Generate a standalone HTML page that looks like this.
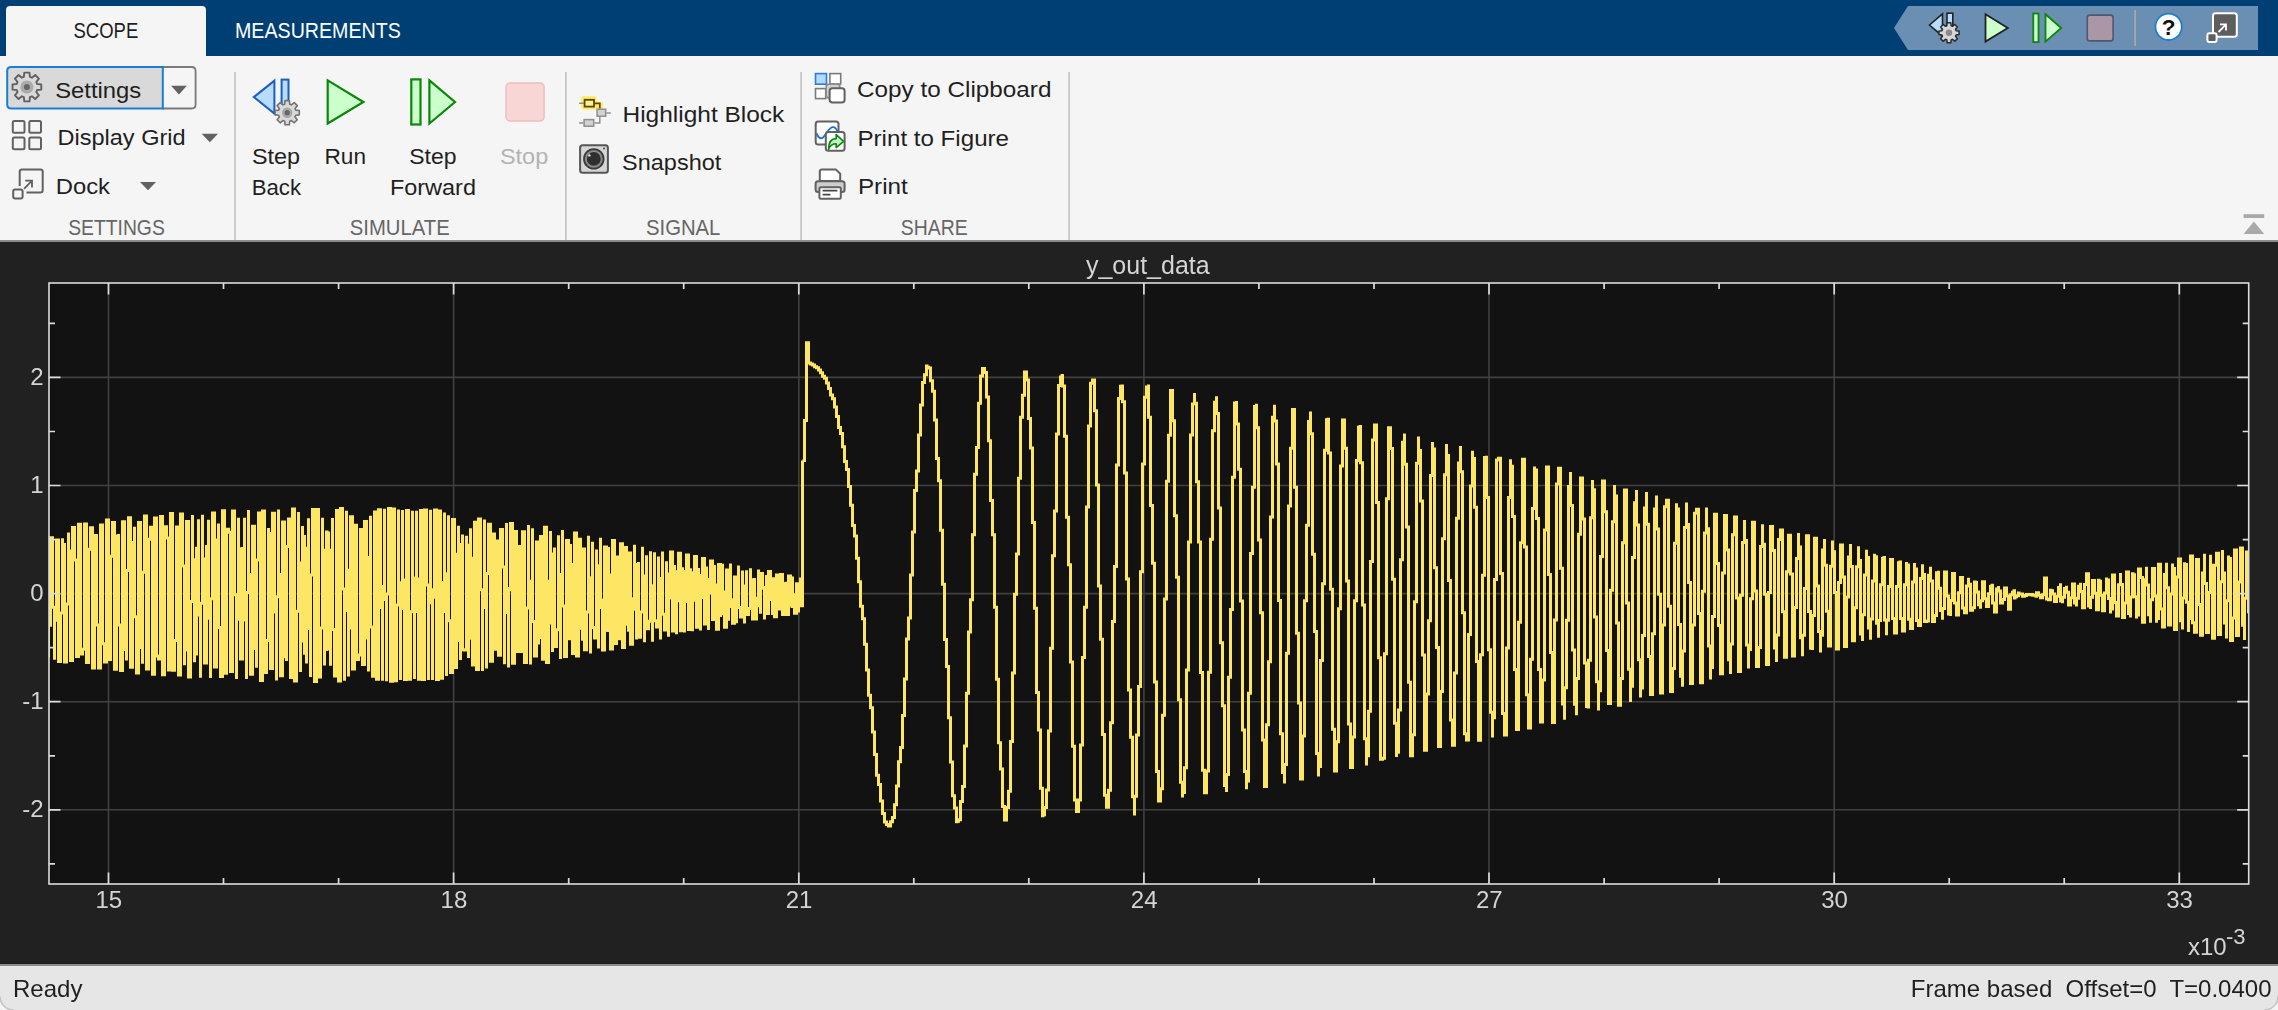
<!DOCTYPE html>
<html><head><meta charset="utf-8"><title>Scope</title>
<style>
html,body{margin:0;padding:0;background:#212121;width:2278px;height:1010px;overflow:hidden}
svg{position:absolute;left:0;top:0;display:block}
text{font-family:"Liberation Sans",sans-serif;white-space:pre}
</style></head>
<body>
<svg width="2278" height="1010" viewBox="0 0 2278 1010" style="will-change:transform">
<g id="plot">
<rect x="0" y="242" width="2278" height="722" fill="#212121"/>
<rect x="49" y="283" width="2199.7" height="601" fill="#121212"/>
<path d="M108.5 283V884M453.6 283V884M798.8 283V884M1143.9 283V884M1489.0 283V884M1834.2 283V884M2179.3 283V884M49 377.4H2248.7M49 485.5H2248.7M49 593.6H2248.7M49 701.7H2248.7M49 809.8H2248.7" stroke="#404040" stroke-width="1.6" fill="none"/>
<clipPath id="cp"><rect x="49" y="283" width="2199.7" height="601"/></clipPath>
<g clip-path="url(#cp)" fill="none" stroke="#fce663" stroke-linejoin="miter"><path d="M46.5 536.8H46.5V601.5H48.5V657.5H48.5V625.2H50.5V549.5H50.5V537.7H52.5V607.2H54.5V659.8H54.5V620.2H56.5V544.1H56.5V540.1H58.5V614.5H58.5V661.4H60.5V613.1H62.5V538.3H62.5V544.4H64.5V623.3H64.5V661.9H66.5V604.0H68.5V532.5H68.5V550.9H70.5V633.2H70.5V660.5H72.5V592.6H72.5V527.5H74.5V560.1H76.5V643.7H76.5V656.6H78.5V579.3H78.5V524.3H80.5V572.4H80.5V653.9H82.5V649.2H84.5V564.5H84.5V524.0H86.5V587.8H86.5V662.6H88.5V637.8H88.5V549.3H90.5V527.8H92.5V605.7H92.5V668.0H94.5V621.9H94.5V535.4H96.5V537.2H96.5V625.0H98.5V668.1H100.5V601.9H100.5V525.0H102.5V552.5H102.5V643.7H104.5V661.9H106.5V579.4H106.5V519.9H108.5V573.3H108.5V659.5H110.5V648.4H110.5V556.3H112.5V522.4H114.5V598.3H114.5V669.3H116.5V627.4H116.5V535.9H118.5V533.9H118.5V625.0H120.5V670.4H122.5V600.4H122.5V521.8H124.5V554.9H124.5V649.6H126.5V660.5H126.5V570.5H128.5V517.8H130.5V583.8H130.5V667.2H132.5V639.1H132.5V542.5H134.5V526.8H134.5V616.7H136.5V673.0H138.5V608.0H138.5V522.4H140.5V549.5H140.5V647.6H142.5V663.7H142.5V572.2H144.5V516.0H146.5V583.3H146.5V669.0H148.5V638.5H148.5V539.3H150.5V527.3H152.5V621.9H152.5V674.2H154.5V601.3H154.5V518.0H156.5V556.3H156.5V655.9H158.5V658.9H160.5V560.1H160.5V516.4H162.5V597.7H162.5V674.8H164.5V624.5H164.5V526.8H166.5V537.9H168.5V640.3H168.5V670.1H170.5V579.2H170.5V513.4H172.5V578.7H172.5V670.2H174.5V640.4H176.5V537.1H176.5V527.0H178.5V626.8H178.5V675.0H180.5V593.3H180.5V514.0H182.5V566.1H184.5V665.2H184.5V649.9H186.5V544.9H186.5V521.4H188.5V618.1H188.5V676.9H190.5V601.4H192.5V515.1H192.5V559.7H194.5V662.3H194.5V654.1H196.5V548.3H198.5V519.2H198.5V615.1H200.5V677.7H200.5V603.3H202.5V514.8H202.5V559.1H204.5V662.9H206.5V653.8H206.5V546.6H208.5V519.7H208.5V618.3H210.5V677.9H210.5V598.8H212.5V513.0H214.5V564.3H214.5V667.0H216.5V648.7H216.5V539.9H218.5V523.5H218.5V627.4H220.5V676.6H222.5V587.8H222.5V510.8H224.5V576.0H224.5V673.3H226.5V637.7H226.5V529.3H228.5V532.3H230.5V641.8H230.5V671.6H232.5V570.5H232.5V511.0H234.5V594.8H236.5V678.9H236.5V619.2H238.5V517.8H238.5V548.7H240.5V659.0H240.5V659.1H242.5V548.6H244.5V517.8H244.5V620.0H246.5V678.9H246.5V592.5H248.5V510.1H248.5V574.6H250.5V674.3H252.5V636.1H252.5V526.2H254.5V535.8H254.5V648.4H256.5V667.8H256.5V559.9H258.5V513.1H260.5V609.4H260.5V680.4H262.5V601.4H262.5V510.9H264.5V568.0H264.5V672.4H266.5V640.4H268.5V528.1H268.5V533.6H270.5V647.4H270.5V668.4H272.5V559.2H272.5V513.2H274.5V612.1H276.5V680.5H276.5V596.7H278.5V509.6H278.5V574.4H280.5V675.8H282.5V632.8H282.5V522.0H284.5V541.6H284.5V656.7H286.5V661.0H286.5V546.6H288.5V518.9H290.5V627.9H290.5V677.6H292.5V578.2H292.5V508.9H294.5V594.9H294.5V681.0H296.5V611.3H298.5V511.9H298.5V563.0H300.5V672.0H300.5V640.9H302.5V526.1H302.5V536.6H304.5V653.3H306.5V663.5H306.5V548.3H308.5V518.3H308.5V628.5H310.5V677.1H310.5V575.0H312.5V509.4H314.5V601.0H314.5V681.4H316.5V602.5H316.5V509.6H318.5V574.1H318.5V677.0H320.5V628.1H322.5V517.7H322.5V550.3H324.5V665.6H324.5V649.6H326.5V531.9H328.5V531.4H328.5V649.1H330.5V665.8H330.5V550.2H332.5V518.1H332.5V629.6H334.5V676.1H336.5V570.4H336.5V510.6H338.5V609.0H338.5V680.9H340.5V591.0H340.5V508.4H342.5V588.9H344.5V680.7H344.5V610.5H346.5V510.8H346.5V570.3H348.5V676.4H348.5V628.0H350.5V516.8H352.5V554.0H352.5V669.0H354.5V642.9H354.5V525.3H356.5V540.4H356.5V659.6H358.5V655.1H360.5V535.5H360.5V529.6H362.5V648.9H362.5V664.5H364.5V546.4H364.5V521.5H366.5V637.9H368.5V671.5H368.5V557.4H370.5V515.7H370.5V627.0H372.5V676.2H374.5V568.0H374.5V511.9H376.5V616.8H376.5V679.2H378.5V577.8H378.5V509.7H380.5V607.5H382.5V680.7H382.5V586.5H384.5V508.7H384.5V599.4H386.5V681.3H386.5V594.0H388.5V508.5H390.5V592.5H390.5V681.2H392.5V600.2H392.5V508.9H394.5V587.0H394.5V680.7H396.5V605.0H398.5V509.4H398.5V582.8H400.5V680.0H400.5V608.6H402.5V510.0H402.5V580.0H404.5V679.5H406.5V610.8H406.5V510.5H408.5V578.4H408.5V679.2H410.5V611.7H412.5V510.7H412.5V578.1H414.5V679.0H414.5V611.4H416.5V510.7H416.5V579.1H418.5V679.2H420.5V609.8H420.5V510.5H422.5V581.3H422.5V679.5H424.5V606.9H424.5V510.1H426.5V584.9H428.5V679.9H428.5V602.7H430.5V509.7H430.5V589.7H432.5V679.9H432.5V597.2H434.5V510.1H436.5V595.8H436.5V679.4H438.5V590.5H438.5V510.9H440.5V603.1H440.5V678.2H442.5V582.6H444.5V512.5H444.5V611.5H446.5V676.1H446.5V573.8H448.5V515.3H448.5V620.7H450.5V672.6H452.5V564.2H452.5V519.5H454.5V630.6H454.5V667.5H456.5V554.2H458.5V525.8H458.5V640.4H460.5V659.9H460.5V544.6H462.5V534.5H462.5V649.8H464.5V650.1H466.5V535.7H466.5V545.3H468.5V658.1H468.5V638.2H470.5V528.2H470.5V558.3H472.5V664.9H474.5V624.4H474.5V522.2H476.5V573.1H476.5V669.6H478.5V608.6H478.5V519.0H480.5V589.7H482.5V671.0H482.5V591.4H484.5V519.5H484.5V607.4H486.5V668.5H486.5V573.5H488.5V524.3H490.5V625.1H490.5V661.3H492.5V556.2H492.5V533.9H494.5V641.6H494.5V649.3H496.5V540.9H498.5V548.3H498.5V655.2H500.5V632.7H500.5V529.4H502.5V566.9H504.5V664.3H504.5V612.4H506.5V523.1H506.5V588.6H508.5V667.4H508.5V589.7H510.5V523.5H512.5V611.6H512.5V663.3H514.5V566.9H514.5V531.4H516.5V633.6H516.5V651.5H518.5V546.6H520.5V547.0H520.5V651.5H522.5V632.5H522.5V531.7H524.5V569.0H524.5V662.6H526.5V608.1H528.5V525.0H528.5V595.0H530.5V664.5H530.5V581.3H532.5V528.2H532.5V621.6H534.5V656.0H536.5V556.0H536.5V541.9H538.5V644.5H538.5V637.4H540.5V536.6H542.5V564.9H542.5V659.3H544.5V611.0H544.5V527.2H546.5V593.6H546.5V662.5H548.5V581.2H550.5V530.9H550.5V622.9H552.5V652.1H552.5V553.9H554.5V547.5H554.5V646.6H556.5V629.8H558.5V535.3H558.5V574.5H560.5V659.0H560.5V599.7H562.5V530.1H562.5V606.1H564.5V656.4H566.5V568.4H566.5V540.5H568.5V634.9H568.5V638.7H570.5V543.9H570.5V564.6H572.5V653.4H574.5V609.6H574.5V532.9H576.5V596.8H576.5V655.9H578.5V576.5H578.5V539.3H580.5V628.3H582.5V640.8H582.5V549.0H584.5V562.2H584.5V649.7H586.5V611.9H588.5V535.7H588.5V595.0H590.5V653.6H590.5V577.7H592.5V541.7H592.5V627.6H594.5V638.0H596.5V549.6H596.5V565.7H598.5V648.6H598.5V607.6H600.5V537.8H600.5V599.9H602.5V650.0H604.5V572.8H604.5V547.1H606.5V631.8H606.5V630.6H608.5V546.9H608.5V574.9H610.5V648.9H612.5V597.3H612.5V540.6H614.5V610.3H614.5V643.6H616.5V563.4H616.5V557.0H618.5V638.7H620.5V617.7H620.5V543.7H622.5V589.8H622.5V647.4H624.5V581.9H624.5V547.4H626.5V624.3H628.5V631.7H628.5V552.9H630.5V573.3H630.5V644.2H632.5V598.7H634.5V544.7H634.5V609.2H636.5V639.5H636.5V564.4H638.5V561.9H638.5V637.2H640.5V611.9H642.5V546.7H642.5V596.0H644.5V642.2H644.5V575.9H646.5V555.2H646.5V628.8H648.5V621.2H650.5V551.2H650.5V585.7H652.5V641.7H652.5V585.7H654.5V552.2H654.5V620.8H656.5V626.9H658.5V556.5H658.5V578.5H660.5V639.5H660.5V593.1H662.5V551.5H662.5V614.3H664.5V630.0H666.5V561.3H666.5V574.0H668.5V636.8H668.5V598.1H670.5V552.1H672.5V609.6H672.5V631.1H674.5V565.0H674.5V571.8H676.5V634.3H676.5V600.8H678.5V553.3H680.5V607.0H680.5V630.8H682.5V567.3H682.5V571.5H684.5V632.4H684.5V601.5H686.5V554.9H688.5V606.2H688.5V629.4H690.5V568.2H690.5V572.8H692.5V631.3H692.5V600.3H694.5V556.5H696.5V607.2H696.5V627.2H698.5V567.9H698.5V575.5H700.5V630.6H700.5V597.4H702.5V558.4H704.5V609.6H704.5V624.0H706.5V566.6H706.5V579.6H708.5V630.1H708.5V593.1H710.5V561.0H712.5V613.1H712.5V619.6H714.5V564.9H714.5V585.1H716.5V629.2H718.5V587.6H718.5V564.6H720.5V617.1H720.5V613.7H722.5V563.7H722.5V592.0H724.5V627.2H726.5V581.5H726.5V569.9H728.5V620.8H728.5V606.4H730.5V563.6H730.5V599.7H732.5V623.3H734.5V575.5H734.5V577.0H736.5V623.3H736.5V597.7H738.5V565.5H738.5V607.6H740.5V617.1H742.5V570.6H742.5V585.9H744.5V623.5H744.5V588.4H746.5V570.2H746.5V614.5H748.5V608.6H750.5V568.2H750.5V596.0H752.5V620.5H752.5V579.8H754.5V578.0H754.5V619.0H756.5V598.2H758.5V569.4H758.5V605.8H760.5V613.8H760.5V573.6H762.5V588.3H764.5V619.5H764.5V587.5H766.5V574.9H766.5V613.5H768.5V603.9H768.5V571.6H770.5V599.4H772.5V615.1H772.5V578.8H774.5V584.4H774.5V616.7H776.5V592.5H776.5V575.0H778.5V609.0H780.5V606.2H780.5V574.4H782.5V595.9H782.5V614.5H784.5V582.2H784.5V583.2H786.5V614.4H788.5V594.7H788.5V575.9H790.5V606.6H790.5V606.5H792.5V576.4H792.5V594.8H794.5V613.2H796.5V583.8H796.5V583.8H798.5V612.6H798.5V594.9H800.5V577.5H800.5V605.8H802.5V460.6" stroke-width="3"/><path d="M802.5 460.6H804.5V420.6H806.5V342.8H808.5V362.9H810.5V363.4H810.5V363.9H812.5V364.5H812.5V365.1H814.5V365.9H814.5V366.7H816.5V367.7H818.5V368.7H818.5V369.9H820.5V371.3H820.5V372.8H822.5V374.4H822.5V376.2H824.5V378.3H826.5V380.5H826.5V382.9H828.5V385.6H828.5V388.5H830.5V391.6H830.5V395.0H832.5V398.7H834.5V402.7H834.5V407.1H836.5V411.7H836.5V416.6H838.5V422.0H838.5V427.6H840.5V433.6H842.5V440.0H842.5V446.8H844.5V454.0H844.5V461.5H846.5V469.5H848.5V477.8H848.5V486.6H850.5V495.7H850.5V505.2H852.5V515.1H852.5V525.4H854.5V536.0H856.5V547.0H856.5V558.3H858.5V569.9H858.5V581.8H860.5V593.9H860.5V606.3H862.5V618.8H864.5V631.5H864.5V644.2H866.5V657.0H866.5V669.9H868.5V682.6H868.5V695.3H870.5V707.7H872.5V720.0H872.5V731.9H874.5V743.5H874.5V754.6H876.5V765.2H876.5V775.2H878.5V784.5H880.5V793.1H880.5V800.9H882.5V807.7H882.5V813.6H884.5V818.4H884.5V822.1H886.5V824.6H888.5V825.9H890.5V824.4H890.5V821.7H892.5V817.4H894.5V811.8H894.5V804.7H896.5V796.1H896.5V786.1H898.5V774.6H898.5V761.7H900.5V747.5H902.5V732.1H902.5V715.4H904.5V697.6H904.5V678.9H906.5V659.2H906.5V638.9H908.5V617.9H910.5V596.6H910.5V575.1H912.5V553.5H912.5V532.1H914.5V511.1H914.5V490.6H916.5V471.0H918.5V452.4H918.5V435.1H920.5V419.3H920.5V405.1H922.5V392.8H922.5V382.6H924.5V374.7H926.5V369.1H926.5V366.1H928.5V365.7H928.5V368.0H930.5V373.0H930.5V380.7H932.5V391.2H934.5V404.4H934.5V420.1H936.5V438.2H936.5V458.5H938.5V480.8H940.5V504.8H940.5V530.3H942.5V556.8H942.5V584.2H944.5V611.8H944.5V639.4H946.5V666.6H948.5V692.8H948.5V717.8H950.5V740.9H950.5V761.9H952.5V780.3H952.5V795.8H954.5V808.0H956.5V816.7H956.5V821.7H958.5V822.7H958.5V819.7H960.5V812.7H960.5V801.6H962.5V786.6H964.5V768.0H964.5V746.0H966.5V720.9H966.5V693.2H968.5V663.4H968.5V632.0H970.5V599.7H972.5V567.1H972.5V534.8H974.5V503.7H974.5V474.3H976.5V447.4H978.5V423.5H978.5V403.3H980.5V387.3H980.5V375.9H982.5V369.6H982.5V368.4H984.5V372.6H986.5V382.2H986.5V396.9H988.5V416.6H988.5V440.8H990.5V469.0H990.5V500.6H992.5V534.7H994.5V570.6H994.5V607.3H996.5V643.9H996.5V679.3H998.5V712.6H998.5V742.8H1000.5V769.1H1002.5V790.6H1002.5V806.6H1004.5V816.5H1004.5V820.1H1006.5V817.1H1006.5V807.4H1008.5V791.3H1010.5V769.1H1010.5V741.5H1012.5V709.2H1012.5V673.1H1014.5V634.4H1014.5V594.3H1016.5V554.0H1018.5V514.8H1018.5V478.2H1020.5V445.2H1020.5V417.2H1022.5V395.2H1024.5V379.9H1024.5V372.0H1026.5V379.9H1028.5V395.6H1028.5V418.5H1030.5V448.0H1032.5V483.0H1032.5V522.4H1034.5V564.6H1034.5V608.2H1036.5V651.4H1036.5V692.6H1038.5V730.1H1040.5V762.4H1040.5V788.2H1042.5V806.2H1042.5V815.7H1044.5V816.2H1044.5V807.6H1046.5V790.0H1048.5V764.1H1048.5V730.9H1050.5V691.7H1050.5V648.2H1052.5V602.2H1052.5V555.8H1054.5V510.9H1056.5V469.6H1056.5V433.9H1058.5V405.4H1058.5V385.6H1060.5V375.4H1060.5V375.5H1062.5V386.0H1064.5V406.6H1064.5V436.3H1066.5V473.8H1066.5V517.3H1068.5V564.8H1070.5V613.8H1070.5V662.1H1072.5V707.0H1072.5V746.3H1074.5V777.9H1074.5V800.0H1076.5V811.5H1078.5V811.5H1078.5V800.1H1080.5V777.6H1080.5V745.1H1082.5V704.4H1082.5V657.6H1084.5V607.2H1086.5V556.1H1086.5V507.0H1088.5V462.8H1088.5V426.1H1090.5V399.0H1090.5V383.2H1092.5V379.9H1094.5V389.1H1094.5V410.7H1096.5V443.3H1096.5V485.1H1098.5V533.7H1098.5V586.1H1100.5V639.3H1102.5V689.7H1102.5V734.4H1104.5V770.3H1104.5V795.2H1106.5V807.2H1108.5V805.6H1108.5V790.3H1110.5V762.1H1110.5V722.8H1112.5V674.9H1112.5V621.6H1114.5V566.4H1116.5V513.0H1116.5V465.1H1118.5V426.0H1118.5V398.6H1120.5V384.8H1120.5V385.9H1122.5V401.7H1124.5V431.4H1124.5V472.9H1126.5V523.3H1126.5V579.0H1128.5V636.0H1128.5V690.1H1130.5V737.2H1132.5V773.7H1132.5V796.8H1134.5V815.4H1134.5V796.3H1136.5V772.5H1136.5V735.0H1138.5V686.4H1140.5V630.5H1140.5V571.7H1142.5V514.7H1142.5V464.0H1144.5V423.7H1144.5V397.3H1146.5V387.0H1148.5V384.6H1148.5V417.3H1150.5V455.6H1150.5V505.6H1152.5V563.3H1154.5V623.8H1154.5V681.9H1156.5V732.6H1156.5V771.4H1158.5V794.9H1158.5V800.9H1160.5V788.8H1162.5V759.4H1162.5V715.2H1164.5V660.1H1164.5V599.1H1166.5V537.6H1166.5V481.2H1168.5V435.3H1170.5V404.0H1170.5V390.6H1172.5V396.3H1172.5V420.8H1174.5V461.9H1174.5V515.7H1176.5V577.3H1178.5V640.7H1178.5V699.7H1180.5V748.5H1180.5V782.3H1182.5V797.5H1182.5V792.6H1184.5V767.8H1186.5V725.6H1186.5V670.0H1188.5V606.6H1188.5V542.0H1190.5V482.8H1190.5V435.1H1192.5V404.0H1194.5V393.0H1194.5V403.2H1196.5V433.9H1196.5V481.8H1198.5V542.0H1200.5V607.9H1200.5V672.6H1202.5V728.8H1202.5V770.3H1204.5V792.6H1204.5V792.8H1206.5V771.0H1208.5V729.3H1208.5V672.3H1210.5V606.5H1210.5V539.3H1212.5V478.4H1212.5V430.8H1214.5V402.3H1216.5V396.3H1216.5V413.6H1218.5V452.3H1218.5V508.0H1220.5V574.2H1220.5V642.8H1222.5V705.8H1224.5V755.4H1224.5V785.4H1226.5V792.1H1226.5V774.4H1228.5V734.6H1228.5V677.3H1230.5V609.6H1232.5V540.0H1232.5V477.3H1234.5V429.6H1234.5V402.9H1236.5V400.9H1236.5V424.0H1238.5V469.2H1240.5V531.0H1240.5V601.1H1242.5V670.5H1242.5V729.9H1244.5V771.4H1246.5V789.2H1246.5V780.9H1248.5V747.5H1248.5V693.2H1250.5V625.5H1250.5V553.6H1252.5V487.3H1254.5V435.9H1254.5V406.6H1256.5V403.7H1256.5V427.7H1258.5V475.4H1258.5V540.1H1260.5V612.7H1262.5V682.7H1262.5V740.1H1264.5V776.5H1264.5V786.4H1266.5V768.3H1266.5V724.7H1268.5V661.8H1270.5V589.0H1270.5V517.1H1272.5V456.8H1272.5V417.3H1274.5V404.7H1274.5V421.0H1276.5V463.9H1278.5V526.9H1278.5V600.4H1280.5V673.1H1280.5V733.7H1282.5V772.5H1284.5V783.4H1284.5V764.6H1286.5V718.8H1286.5V653.2H1288.5V578.3H1288.5V506.1H1290.5V448.2H1292.5V414.1H1292.5V409.4H1294.5V435.3H1294.5V487.3H1296.5V557.2H1296.5V633.3H1298.5V703.0H1300.5V754.5H1300.5V779.1H1302.5V772.6H1302.5V735.9H1304.5V675.1H1304.5V600.7H1306.5V525.2H1308.5V461.8H1308.5V421.6H1310.5V411.6H1310.5V433.8H1312.5V484.3H1312.5V554.3H1314.5V631.5H1316.5V702.1H1316.5V753.5H1318.5V776.4H1318.5V766.4H1320.5V725.3H1320.5V660.5H1322.5V583.7H1324.5V509.0H1324.5V450.2H1326.5V418.3H1326.5V419.2H1328.5V453.1H1330.5V513.5H1330.5V589.3H1332.5V666.0H1332.5V729.2H1334.5V766.6H1334.5V771.1H1336.5V741.7H1338.5V683.9H1338.5V608.8H1340.5V531.1H1340.5V466.0H1342.5V426.3H1342.5V419.9H1344.5V448.2H1346.5V505.7H1346.5V581.0H1348.5V659.0H1348.5V724.0H1350.5V762.8H1350.5V767.5H1352.5V736.9H1354.5V677.3H1354.5V600.8H1356.5V523.1H1356.5V460.4H1358.5V425.8H1358.5V426.6H1360.5V462.7H1362.5V526.6H1362.5V604.9H1364.5V681.0H1364.5V738.7H1366.5V765.6H1366.5V755.7H1368.5V711.2H1370.5V641.4H1370.5V561.6H1372.5V489.2H1372.5V440.0H1374.5V424.9H1376.5V447.4H1376.5V502.6H1378.5V578.3H1378.5V657.7H1380.5V722.9H1380.5V759.2H1382.5V758.3H1384.5V720.3H1384.5V653.7H1386.5V573.8H1386.5V498.8H1388.5V446.0H1388.5V427.7H1390.5V448.4H1392.5V503.1H1392.5V579.3H1394.5V658.9H1394.5V723.3H1396.5V757.1H1396.5V752.3H1398.5V710.1H1400.5V640.3H1400.5V559.8H1402.5V488.0H1402.5V442.2H1404.5V433.6H1404.5V464.3H1406.5V526.9H1408.5V606.1H1408.5V682.3H1410.5V736.7H1410.5V755.8H1412.5V734.7H1414.5V678.7H1414.5V601.8H1416.5V523.4H1416.5V463.2H1418.5V436.6H1418.5V450.4H1420.5V501.1H1422.5V575.7H1422.5V655.1H1424.5V718.8H1424.5V750.3H1426.5V741.2H1426.5V693.9H1428.5V620.8H1430.5V541.0H1430.5V475.5H1432.5V441.9H1432.5V449.0H1434.5V495.0H1434.5V567.7H1436.5V647.5H1438.5V713.0H1438.5V746.4H1440.5V738.6H1440.5V691.6H1442.5V618.3H1442.5V538.7H1444.5V474.7H1446.5V444.1H1446.5V455.4H1448.5V505.4H1448.5V580.4H1450.5V659.3H1450.5V720.0H1452.5V745.3H1454.5V728.0H1454.5V672.9H1456.5V595.6H1456.5V518.3H1458.5V463.0H1460.5V445.9H1460.5V471.8H1462.5V533.4H1462.5V612.8H1464.5V686.8H1464.5V733.8H1466.5V739.9H1468.5V703.2H1468.5V634.6H1470.5V554.2H1470.5V486.1H1472.5V450.7H1472.5V458.5H1474.5V507.3H1476.5V582.5H1476.5V661.4H1478.5V719.9H1478.5V740.2H1480.5V716.0H1480.5V654.8H1482.5V575.2H1484.5V501.8H1484.5V457.4H1486.5V455.8H1486.5V497.6H1488.5V569.8H1488.5V649.7H1490.5V712.2H1492.5V737.6H1492.5V717.7H1494.5V658.8H1494.5V579.6H1496.5V505.4H1496.5V460.1H1498.5V458.3H1500.5V500.6H1500.5V573.4H1502.5V653.0H1502.5V713.5H1504.5V735.0H1506.5V710.5H1506.5V648.0H1508.5V568.2H1508.5V497.4H1510.5V459.2H1510.5V466.3H1512.5V516.4H1514.5V592.7H1514.5V669.6H1516.5V721.0H1516.5V729.6H1518.5V692.5H1518.5V622.2H1520.5V542.8H1522.5V481.4H1522.5V459.2H1524.5V483.9H1524.5V546.9H1526.5V626.4H1526.5V694.7H1528.5V728.0H1530.5V714.6H1530.5V659.2H1532.5V581.3H1532.5V508.4H1534.5V466.4H1534.5V470.1H1536.5V518.4H1538.5V593.8H1538.5V669.5H1540.5V718.1H1540.5V722.1H1542.5V680.1H1544.5V607.2H1544.5V530.1H1546.5V476.8H1546.5V467.0H1548.5V504.1H1548.5V574.6H1550.5V652.4H1552.5V708.7H1552.5V722.5H1554.5V688.7H1554.5V619.9H1556.5V541.9H1556.5V484.1H1558.5V468.3H1560.5V500.4H1560.5V568.3H1562.5V646.0H1562.5V703.9H1564.5V719.8H1564.5V687.8H1566.5V620.2H1568.5V543.1H1568.5V486.4H1570.5V472.0H1570.5V505.6H1572.5V573.8H1572.5V650.0H1574.5V704.2H1576.5V715.2H1576.5V678.6H1578.5V609.1H1578.5V534.2H1580.5V483.8H1580.5V478.1H1582.5V519.1H1584.5V590.3H1584.5V663.1H1586.5V708.0H1586.5V706.9H1588.5V660.3H1590.5V587.3H1590.5V517.7H1592.5V480.1H1592.5V489.8H1594.5V542.6H1594.5V616.9H1596.5V681.8H1598.5V710.4H1598.5V690.7H1600.5V631.1H1600.5V556.6H1602.5V498.4H1602.5V481.0H1604.5V511.8H1606.5V577.7H1606.5V650.6H1608.5V699.6H1608.5V703.6H1610.5V661.1H1610.5V590.3H1612.5V521.8H1614.5V485.0H1614.5V496.0H1616.5V549.8H1616.5V623.0H1618.5V683.7H1618.5V705.3H1620.5V678.4H1622.5V614.9H1622.5V542.7H1624.5V494.0H1624.5V490.1H1626.5V532.9H1626.5V603.1H1628.5V669.3H1630.5V701.9H1630.5V686.3H1632.5V629.6H1632.5V557.5H1634.5V502.7H1636.5V490.0H1636.5V525.1H1638.5V591.9H1638.5V659.7H1640.5V697.5H1640.5V687.9H1642.5V635.5H1644.5V564.5H1644.5V508.0H1646.5V492.1H1646.5V524.2H1648.5V589.1H1648.5V656.4H1650.5V694.5H1652.5V685.5H1652.5V633.8H1654.5V563.9H1654.5V509.1H1656.5V495.4H1656.5V529.1H1658.5V594.2H1660.5V659.2H1660.5V693.0H1662.5V679.4H1662.5V625.0H1664.5V556.4H1664.5V506.8H1666.5V500.3H1668.5V540.0H1668.5V606.3H1670.5V666.7H1670.5V691.5H1672.5V668.5H1674.5V609.3H1674.5V543.3H1676.5V503.3H1676.5V509.1H1678.5V557.6H1678.5V624.6H1680.5V676.2H1682.5V686.8H1682.5V650.9H1684.5V587.0H1684.5V527.4H1686.5V502.4H1686.5V524.6H1688.5V582.5H1690.5V646.4H1690.5V683.6H1692.5V674.9H1692.5V625.1H1694.5V560.0H1694.5V513.3H1696.5V509.2H1698.5V549.7H1698.5V613.6H1700.5V667.3H1700.5V682.8H1702.5V652.0H1702.5V591.3H1704.5V532.9H1706.5V507.6H1706.5V528.8H1708.5V584.9H1708.5V646.1H1710.5V679.5H1710.5V667.4H1712.5V616.5H1714.5V554.3H1714.5V514.3H1716.5V518.2H1716.5V563.6H1718.5V625.6H1720.5V670.4H1720.5V673.7H1722.5V633.9H1722.5V573.0H1724.5V524.8H1724.5V515.5H1726.5V550.1H1728.5V609.1H1728.5V659.8H1730.5V674.0H1730.5V644.0H1732.5V586.9H1732.5V534.8H1734.5V516.9H1736.5V542.9H1736.5V598.0H1738.5V650.8H1738.5V671.5H1740.5V648.6H1740.5V595.3H1742.5V542.4H1744.5V519.9H1744.5V540.5H1746.5V592.2H1746.5V645.0H1748.5V668.5H1748.5V649.4H1750.5V598.7H1752.5V546.2H1752.5V522.3H1754.5V541.0H1754.5V591.0H1756.5V643.1H1756.5V666.5H1758.5V647.6H1760.5V597.7H1760.5V546.5H1762.5V524.3H1762.5V544.2H1764.5V594.2H1766.5V644.3H1766.5V664.5H1768.5V642.8H1768.5V592.5H1770.5V543.9H1770.5V526.5H1772.5V550.5H1774.5V601.3H1774.5V647.9H1776.5V661.9H1776.5V634.9H1778.5V583.6H1778.5V539.6H1780.5V529.9H1782.5V560.3H1782.5V611.8H1784.5V652.5H1784.5V657.2H1786.5V623.2H1786.5V571.8H1788.5V535.2H1790.5V536.2H1790.5V574.0H1792.5V624.6H1792.5V656.1H1794.5V648.8H1794.5V607.5H1796.5V558.5H1798.5V533.0H1798.5V547.1H1800.5V591.5H1800.5V637.8H1802.5V656.2H1802.5V635.2H1804.5V588.4H1806.5V546.2H1806.5V535.8H1808.5V563.7H1808.5V611.6H1810.5V648.3H1812.5V649.9H1812.5V615.6H1814.5V568.0H1814.5V538.3H1816.5V546.0H1816.5V585.9H1818.5V631.4H1820.5V652.5H1820.5V635.3H1822.5V591.3H1822.5V550.1H1824.5V538.9H1824.5V565.3H1826.5V611.3H1828.5V646.0H1828.5V646.1H1830.5V611.6H1830.5V566.2H1832.5V540.4H1832.5V551.8H1834.5V592.4H1836.5V634.4H1836.5V649.1H1838.5V626.7H1838.5V582.6H1840.5V547.3H1840.5V545.0H1842.5V577.1H1844.5V621.2H1844.5V646.6H1846.5V635.9H1846.5V596.9H1848.5V557.0H1850.5V544.0H1850.5V566.6H1852.5V608.8H1852.5V640.7H1854.5V640.0H1854.5V607.7H1856.5V566.7H1858.5V546.2H1858.5V560.4H1860.5V598.9H1860.5V634.0H1862.5V640.9H1862.5V614.8H1864.5V574.9H1866.5V549.8H1866.5V557.4H1868.5V591.9H1868.5V628.0H1870.5V639.8H1870.5V618.9H1872.5V581.0H1874.5V553.7H1874.5V556.8H1876.5V587.6H1876.5V623.3H1878.5V637.7H1878.5V620.5H1880.5V584.8H1882.5V557.1H1882.5V557.6H1884.5V585.7H1884.5V620.1H1886.5V635.3H1886.5V620.3H1888.5V586.6H1890.5V559.6H1890.5V559.5H1892.5V585.8H1892.5V618.6H1894.5V633.0H1896.5V618.5H1896.5V586.4H1898.5V561.2H1898.5V561.9H1900.5V587.6H1900.5V618.5H1902.5V630.9H1904.5V615.6H1904.5V584.8H1906.5V562.1H1906.5V565.0H1908.5V590.8H1908.5V619.3H1910.5V628.5H1912.5V611.5H1912.5V582.0H1914.5V562.9H1914.5V569.1H1916.5V595.2H1916.5V620.6H1918.5V625.4H1920.5V606.2H1920.5V578.6H1922.5V564.3H1922.5V574.4H1924.5V600.4H1924.5V621.5H1926.5V621.1H1928.5V599.9H1928.5V575.3H1930.5V566.8H1930.5V580.9H1932.5V605.8H1932.5V621.5H1934.5V615.5H1936.5V593.1H1936.5V572.8H1938.5V570.7H1938.5V588.2H1940.5V610.6H1942.5V619.8H1942.5V608.5H1944.5V586.5H1944.5V571.9H1946.5V576.4H1946.5V595.9H1948.5V614.0H1950.5V616.0H1950.5V600.6H1952.5V581.0H1952.5V573.4H1954.5V583.7H1954.5V602.9H1956.5V614.9H1958.5V610.0H1958.5V592.7H1960.5V577.8H1960.5V577.6H1962.5V591.8H1962.5V608.1H1964.5V612.8H1966.5V602.3H1966.5V586.0H1968.5V577.7H1968.5V584.2H1970.5V599.4H1970.5V610.3H1972.5V607.7H1974.5V594.4H1974.5V582.0H1976.5V581.0H1976.5V591.9H1978.5V604.8H1980.5V608.8H1980.5V600.7H1982.5V588.1H1982.5V581.8H1984.5V587.1H1984.5V598.8H1986.5V606.6H1988.5V604.0H1988.5V593.7H1990.5V585.0H1990.5V585.3H1992.5V593.9H1992.5V602.9H1994.5V612.0H1996.5V597.6H1996.5V588.9H1998.5V585.9H1998.5V590.9H2000.5V599.0H2000.5V602.9H2002.5V599.5H2004.5V592.4H2004.5V588.1H2006.5V590.1H2006.5V596.0H2008.5V600.4H2008.5V609.3H2010.5V594.8H2012.5V590.7H2012.5V590.8H2014.5V594.4H2014.5V597.9H2016.5V598.3H2016.5V595.7H2018.5V593.0H2020.5V592.5H2020.5V594.1H2022.5V595.9H2022.5V596.3H2024.5V595.4H2026.5V594.5H2028.5V594.9H2028.5V594.8H2030.5V594.4H2032.5V595.2H2034.5V596.3H2034.5V596.2H2036.5V594.5H2036.5V592.7H2038.5V592.8H2038.5V595.2H2040.5V597.8H2042.5V597.8H2042.5V594.8H2044.5V591.4H2044.5V578.1H2046.5V594.7H2046.5V599.0H2048.5V599.7H2050.5V595.5H2050.5V590.2H2052.5V589.2H2052.5V593.9H2054.5V600.1H2054.5V601.5H2056.5V596.3H2058.5V589.2H2058.5V587.4H2060.5V583.3H2060.5V601.0H2062.5V603.3H2062.5V597.2H2064.5V588.4H2066.5V585.7H2066.5V592.3H2068.5V601.9H2068.5V604.9H2070.5V597.8H2072.5V587.4H2072.5V584.1H2074.5V591.7H2074.5V602.9H2076.5V606.4H2076.5V598.2H2078.5V586.2H2080.5V582.7H2080.5V591.6H2082.5V604.3H2082.5V607.8H2084.5V598.0H2084.5V584.6H2086.5V573.8H2088.5V592.1H2088.5V606.1H2090.5V609.0H2090.5V597.3H2092.5V582.7H2092.5V580.4H2094.5V593.2H2096.5V608.3H2096.5V609.8H2098.5V595.7H2098.5V580.3H2100.5V579.8H2100.5V595.3H2102.5V610.8H2104.5V609.9H2104.5V593.1H2106.5V577.6H2106.5V580.1H2108.5V598.4H2110.5V613.5H2110.5V609.1H2112.5V589.4H2112.5V575.0H2114.5V581.6H2114.5V602.6H2116.5V615.9H2118.5V606.9H2118.5V584.7H2120.5V572.9H2120.5V584.6H2122.5V607.8H2122.5V617.5H2124.5V602.9H2126.5V579.3H2126.5V572.1H2128.5V589.7H2128.5V613.4H2130.5V617.4H2130.5V596.9H2132.5V573.7H2134.5V573.3H2134.5V596.7H2136.5V618.6H2136.5V614.9H2138.5V588.9H2138.5V569.1H2140.5V577.4H2142.5V605.4H2142.5V622.3H2144.5V609.1H2144.5V579.8H2146.5V566.8H2146.5V585.0H2148.5V614.7H2150.5V622.8H2150.5V599.7H2152.5V570.8H2152.5V568.5H2154.5V595.9H2156.5V622.7H2156.5V618.6H2158.5V587.5H2158.5V564.3H2160.5V575.4H2160.5V608.9H2162.5V627.1H2164.5V608.9H2164.5V574.4H2166.5V562.8H2166.5V587.8H2168.5V621.4H2168.5V625.1H2170.5V594.1H2172.5V563.5H2172.5V568.6H2174.5V604.2H2174.5V629.6H2176.5V615.2H2176.5V577.0H2178.5V559.0H2180.5V582.5H2180.5V620.8H2182.5V629.5H2182.5V597.9H2184.5V562.3H2184.5V564.4H2186.5V602.3H2188.5V632.1H2188.5V618.5H2190.5V576.9H2190.5V555.9H2192.5V580.7H2192.5V622.7H2194.5V632.2H2196.5V597.6H2196.5V559.4H2198.5V562.9H2198.5V604.6H2200.5V635.2H2202.5V618.0H2202.5V573.0H2204.5V553.7H2204.5V583.6H2206.5V627.4H2206.5V632.6H2208.5V592.5H2210.5V554.8H2210.5V565.2H2212.5V611.6H2212.5V638.3H2214.5V612.7H2214.5V565.2H2216.5V553.3H2218.5V592.0H2218.5V634.6H2220.5V629.2H2220.5V581.8H2222.5V550.1H2222.5V573.1H2224.5V622.9H2226.5V638.6H2226.5V600.7H2228.5V555.4H2228.5V558.5H2230.5V606.6H2230.5V640.5H2232.5V618.1H2234.5V566.9H2234.5V550.1H2236.5V588.9H2236.5V635.4H2238.5V631.7H2238.5V582.0H2240.5V548.1H2242.5V572.6H2242.5V625.2H2244.5V640.0H2244.5V598.2H2246.5V552.0H2248.5V559.6H2248.5V611.8H2250.5V642.9H2250.5V613.4H2252.2" stroke-width="3"/></g>
<path d="M108.5 283v11.5M108.5 884v-11.5M223.5 283v6M223.5 884v-6M338.6 283v6M338.6 884v-6M453.6 283v11.5M453.6 884v-11.5M568.7 283v6M568.7 884v-6M683.7 283v6M683.7 884v-6M798.8 283v11.5M798.8 884v-11.5M913.8 283v6M913.8 884v-6M1028.8 283v6M1028.8 884v-6M1143.9 283v11.5M1143.9 884v-11.5M1258.9 283v6M1258.9 884v-6M1374.0 283v6M1374.0 884v-6M1489.0 283v11.5M1489.0 884v-11.5M1604.1 283v6M1604.1 884v-6M1719.1 283v6M1719.1 884v-6M1834.2 283v11.5M1834.2 884v-11.5M1949.2 283v6M1949.2 884v-6M2064.2 283v6M2064.2 884v-6M2179.3 283v11.5M2179.3 884v-11.5M49 863.9h6M2248.7 863.9h-6M49 809.8h11.5M2248.7 809.8h-11.5M49 755.8h6M2248.7 755.8h-6M49 701.7h11.5M2248.7 701.7h-11.5M49 647.6h6M2248.7 647.6h-6M49 593.6h11.5M2248.7 593.6h-11.5M49 539.6h6M2248.7 539.6h-6M49 485.5h11.5M2248.7 485.5h-11.5M49 431.5h6M2248.7 431.5h-6M49 377.4h11.5M2248.7 377.4h-11.5M49 323.4h6M2248.7 323.4h-6" stroke="#dcdcdc" stroke-width="1.7" fill="none"/>
<rect x="49" y="283" width="2199.7" height="601" fill="none" stroke="#dcdcdc" stroke-width="1.6"/>
<text x="108.8" y="908" font-size="24" fill="#d4d4d4" text-anchor="middle">15</text>
<text x="453.9" y="908" font-size="24" fill="#d4d4d4" text-anchor="middle">18</text>
<text x="799.1" y="908" font-size="24" fill="#d4d4d4" text-anchor="middle">21</text>
<text x="1144.2" y="908" font-size="24" fill="#d4d4d4" text-anchor="middle">24</text>
<text x="1489.3" y="908" font-size="24" fill="#d4d4d4" text-anchor="middle">27</text>
<text x="1834.5" y="908" font-size="24" fill="#d4d4d4" text-anchor="middle">30</text>
<text x="2179.6" y="908" font-size="24" fill="#d4d4d4" text-anchor="middle">33</text>
<text x="43.5" y="384.8" font-size="24" fill="#d4d4d4" text-anchor="end">2</text>
<text x="43.5" y="492.9" font-size="24" fill="#d4d4d4" text-anchor="end">1</text>
<text x="43.5" y="601.0" font-size="24" fill="#d4d4d4" text-anchor="end">0</text>
<text x="43.5" y="709.1" font-size="24" fill="#d4d4d4" text-anchor="end">-1</text>
<text x="43.5" y="817.2" font-size="24" fill="#d4d4d4" text-anchor="end">-2</text>
<text x="1147.8" y="274" font-size="25" fill="#d4d4d4" text-anchor="middle">y_out_data</text>
<text x="2188" y="955.4" font-size="24" fill="#d4d4d4">x10</text>
<text x="2226" y="943.6" font-size="22" fill="#d4d4d4">-3</text>
<rect x="0" y="964" width="2278" height="2" fill="#8a8a8a"/>
<rect x="0" y="966" width="2278" height="44" fill="#e6e6e6"/>
<path d="M0 996.5V1010H13.5A13.5 13.5 0 0 1 0 996.5Z" fill="#f4f4f4"/><path d="M0 996.5A13.5 13.5 0 0 0 13.5 1010" fill="none" stroke="#c2c2c2" stroke-width="1.5"/>
<path d="M2278 996.5V1010H2264.5A13.5 13.5 0 0 0 2278 996.5Z" fill="#f4f4f4"/><path d="M2278 996.5A13.5 13.5 0 0 1 2264.5 1010" fill="none" stroke="#c2c2c2" stroke-width="1.5"/>
<text x="13" y="996.6" font-size="24" fill="#1f1f1f">Ready</text>
<text x="2271.5" y="996.6" font-size="24" fill="#1f1f1f" text-anchor="end" xml:space="preserve">Frame based  Offset=0  T=0.0400</text>
</g>
</svg>
<svg width="2278" height="242" viewBox="0 0 2278 242">
<g id="ribbon">
<rect x="0" y="0" width="2278" height="56" fill="#003f73"/>
<path d="M6 56V10Q6 6 10 6H202Q206 6 206 10V56Z" fill="#f5f5f5"/>
<rect x="0" y="56" width="2278" height="184" fill="#f5f5f5"/>
<rect x="0" y="240" width="2278" height="2" fill="#8c8c8c"/>
<text x="73.5" y="38.0" font-size="22.4" fill="#1f1f1f" textLength="64.8" lengthAdjust="spacingAndGlyphs" >SCOPE</text>
<text x="235.0" y="37.8" font-size="22.2" fill="#ffffff" textLength="165.8" lengthAdjust="spacingAndGlyphs" >MEASUREMENTS</text>
<path d="M1894 28L1908 6H2258V50H1908Z" fill="#6a8fb3"/>
<path d="M1929.5 25L1942.5 13.8V36.2Z" fill="#b8dcff" stroke="#222" stroke-width="1.6" stroke-linejoin="miter"/>
<rect x="1947" y="13.2" width="5.8" height="14" fill="#b8dcff" stroke="#222" stroke-width="1.6"/>
<path d="M1946.88 25.71L1947.20 22.76L1950.80 22.76L1951.12 25.71L1952.51 26.29L1954.83 24.43L1957.37 26.97L1955.51 29.29L1956.09 30.68L1959.04 31.00L1959.04 34.60L1956.09 34.92L1955.51 36.31L1957.37 38.63L1954.83 41.17L1952.51 39.31L1951.12 39.89L1950.80 42.84L1947.20 42.84L1946.88 39.89L1945.49 39.31L1943.17 41.17L1940.63 38.63L1942.49 36.31L1941.91 34.92L1938.96 34.60L1938.96 31.00L1941.91 30.68L1942.49 29.29L1940.63 26.97L1943.17 24.43L1945.49 26.29Z" fill="#d6d6d6" stroke="#2a2a2a" stroke-width="1.5" stroke-linejoin="round"/>
<circle cx="1949" cy="32.8" r="3.2" fill="#8a8a8a"/>
<path d="M1985.5 14.2L2007.8 28L1985.5 41.6Z" fill="#ccffcc" stroke="#222" stroke-width="1.8"/>
<rect x="2033.3" y="13.5" width="5.2" height="28.6" fill="#ccffcc" stroke="#0a870a" stroke-width="1.8"/>
<path d="M2045.5 14.2L2061.2 28L2045.5 41.6Z" fill="#ccffcc" stroke="#0a870a" stroke-width="1.8"/>
<rect x="2087.3" y="15.1" width="25.8" height="25.8" rx="2.5" fill="#ab96a6" stroke="#4c5a6c" stroke-width="1.6"/>
<rect x="2134.3" y="10" width="1.7" height="36" fill="#a9a9a9"/>
<circle cx="2168.6" cy="26.8" r="13.2" fill="#fff" stroke="#1a7fd4" stroke-width="1.8"/>
<text x="2168.6" y="34.8" font-size="22.5" font-weight="bold" fill="#111" text-anchor="middle">?</text>
<rect x="2213" y="13.2" width="23.8" height="23.6" rx="2.5" fill="#5e5e5e" stroke="#fff" stroke-width="2"/>
<rect x="2207.4" y="33.2" width="9.2" height="8.8" rx="2" fill="#5e5e5e" stroke="#fff" stroke-width="2"/>
<path d="M2218.5 32L2225.8 24.6M2220 24.4H2226V30.4" fill="none" stroke="#fff" stroke-width="1.8"/>
<rect x="234.2" y="72" width="1.6" height="168" fill="#c2c2c2"/>
<rect x="565.1" y="72" width="1.6" height="168" fill="#c2c2c2"/>
<rect x="800.3" y="72" width="1.6" height="168" fill="#c2c2c2"/>
<rect x="1068.3" y="72" width="1.6" height="168" fill="#c2c2c2"/>
<path d="M162.8 67H191.6Q195.6 67 195.6 71V104.5Q195.6 108.5 191.6 108.5H162.8" fill="#f5f5f5" stroke="#7a7a7a" stroke-width="1.8"/>
<path d="M162.8 67H11.2Q7.2 67 7.2 71V104.5Q7.2 108.5 11.2 108.5H162.8Z" fill="#d9d9d9" stroke="#1a7fd4" stroke-width="2"/>
<path d="M23.86 76.84L24.32 72.63L29.48 72.63L29.94 76.84L31.93 77.67L35.24 75.02L38.88 78.66L36.23 81.97L37.06 83.96L41.27 84.42L41.27 89.58L37.06 90.04L36.23 92.03L38.88 95.34L35.24 98.98L31.93 96.33L29.94 97.16L29.48 101.37L24.32 101.37L23.86 97.16L21.87 96.33L18.56 98.98L14.92 95.34L17.57 92.03L16.74 90.04L12.53 89.58L12.53 84.42L16.74 83.96L17.57 81.97L14.92 78.66L18.56 75.02L21.87 77.67Z" fill="none" stroke="#616161" stroke-width="1.9" stroke-linejoin="round"/>
<circle cx="26.9" cy="87" r="6.6" fill="#ababab"/><circle cx="26.9" cy="87" r="3" fill="#666"/>
<text x="55.2" y="98.0" font-size="22.6" fill="#1f1f1f" textLength="86.1" lengthAdjust="spacingAndGlyphs" >Settings</text>
<path d="M171.1 85.8H186.8L178.95 94.6Z" fill="#616161"/>
<rect x="12.8" y="121" width="11.7" height="11.7" rx="1.5" fill="none" stroke="#616161" stroke-width="2"/>
<rect x="29.3" y="121" width="11.7" height="11.7" rx="1.5" fill="none" stroke="#616161" stroke-width="2"/>
<rect x="12.8" y="137.5" width="11.7" height="11.7" rx="1.5" fill="none" stroke="#616161" stroke-width="2"/>
<rect x="29.3" y="137.5" width="11.7" height="11.7" rx="1.5" fill="none" stroke="#616161" stroke-width="2"/>
<text x="57.5" y="145.4" font-size="22.6" fill="#1f1f1f" textLength="128.1" lengthAdjust="spacingAndGlyphs" >Display Grid</text>
<path d="M201.7 133.8H218L209.85 142.3Z" fill="#616161"/>
<path d="M19.7 186V171.8Q19.7 169.5 22 169.5H40.4Q42.7 169.5 42.7 171.8V190.2Q42.7 192.5 40.4 192.5H26.5" fill="none" stroke="#616161" stroke-width="2"/>
<rect x="13.2" y="189.6" width="9.4" height="8.8" rx="2" fill="none" stroke="#616161" stroke-width="2"/>
<path d="M24 188.8L31.8 180.8M25.2 180.6H32V187.4" fill="none" stroke="#616161" stroke-width="1.8"/>
<text x="55.7" y="193.6" font-size="22.6" fill="#1f1f1f" textLength="54.3" lengthAdjust="spacingAndGlyphs" >Dock</text>
<path d="M140 182.1H156L148 190.2Z" fill="#616161"/>
<text x="68.2" y="234.8" font-size="21.5" fill="#666" textLength="96.6" lengthAdjust="spacingAndGlyphs" >SETTINGS</text>
<path d="M253.8 97.1L274.4 80.6V113.6Z" fill="#b8dcff" stroke="#1b5fbb" stroke-width="2"/>
<rect x="281.6" y="79.6" width="6.9" height="30" fill="#b8dcff" stroke="#1b5fbb" stroke-width="2"/>
<path d="M284.65 104.17L285.03 100.59L289.37 100.59L289.75 104.17L291.43 104.87L294.23 102.60L297.30 105.67L295.03 108.47L295.73 110.15L299.31 110.53L299.31 114.87L295.73 115.25L295.03 116.93L297.30 119.73L294.23 122.80L291.43 120.53L289.75 121.23L289.37 124.81L285.03 124.81L284.65 121.23L282.97 120.53L280.17 122.80L277.10 119.73L279.37 116.93L278.67 115.25L275.09 114.87L275.09 110.53L278.67 110.15L279.37 108.47L277.10 105.67L280.17 102.60L282.97 104.87Z" fill="#d9d9d9" stroke="#737373" stroke-width="1.6" stroke-linejoin="round"/>
<circle cx="287.2" cy="112.7" r="5.2" fill="#a8a8a8"/><circle cx="287.2" cy="112.7" r="2.6" fill="#666"/>
<text x="252.0" y="164.0" font-size="22.6" fill="#1f1f1f" textLength="48.1" lengthAdjust="spacingAndGlyphs" >Step</text>
<text x="251.7" y="195.4" font-size="22.6" fill="#1f1f1f" textLength="49.3" lengthAdjust="spacingAndGlyphs" >Back</text>
<path d="M327.7 80.4L363.4 102L327.7 123.5Z" fill="#ccffcc" stroke="#0a870a" stroke-width="2.2"/>
<text x="324.5" y="164.0" font-size="22.6" fill="#1f1f1f" textLength="41.5" lengthAdjust="spacingAndGlyphs" >Run</text>
<rect x="411.3" y="79.4" width="9.2" height="45.1" fill="#ccffcc" stroke="#0a870a" stroke-width="2.2"/>
<path d="M429.4 80.4L455 102L429.4 123.5Z" fill="#ccffcc" stroke="#0a870a" stroke-width="2.2"/>
<text x="409.2" y="164.0" font-size="22.6" fill="#1f1f1f" textLength="47.3" lengthAdjust="spacingAndGlyphs" >Step</text>
<text x="389.9" y="195.4" font-size="22.6" fill="#1f1f1f" textLength="86.1" lengthAdjust="spacingAndGlyphs" >Forward</text>
<rect x="506" y="83" width="38.1" height="37.9" rx="4" fill="#f9d6d6" stroke="#ecbfbf" stroke-width="1.5"/>
<text x="499.9" y="163.6" font-size="22.6" fill="#b3b3b3" textLength="48.3" lengthAdjust="spacingAndGlyphs" >Stop</text>
<text x="349.8" y="234.8" font-size="21.5" fill="#666" textLength="99.9" lengthAdjust="spacingAndGlyphs" >SIMULATE</text>
<rect x="581.4" y="96.2" width="15.2" height="13.4" rx="2" fill="#ffeb66"/>
<rect x="593.5" y="101.8" width="9.4" height="7.6" rx="2" fill="#ffeb66"/>
<path d="M579.1 103.3H583.8M606.4 113.1H610.8M579.1 123H583.4M594.5 123H599.8V116.8" fill="none" stroke="#8f8f8f" stroke-width="1.5"/>
<path d="M594.6 103.3H599.8V108.5" fill="none" stroke="#5c4700" stroke-width="1.7"/>
<rect x="584.6" y="99.8" width="9.4" height="6.8" fill="#fff29a" stroke="#5c4700" stroke-width="1.8"/>
<rect x="597.1" y="109.2" width="8.6" height="7" fill="#d2d2d2" stroke="#8f8f8f" stroke-width="1.5"/>
<rect x="584.1" y="119.6" width="9.6" height="6.6" fill="#d2d2d2" stroke="#8f8f8f" stroke-width="1.5"/>
<text x="622.5" y="121.5" font-size="22.6" fill="#1f1f1f" textLength="161.8" lengthAdjust="spacingAndGlyphs" >Highlight Block</text>
<rect x="580.1" y="145.3" width="27.8" height="27.5" rx="2.5" fill="#d6d6d6" stroke="#555" stroke-width="2"/>
<circle cx="593.8" cy="158.9" r="9.8" fill="#8a8a8a" stroke="#3a3a3a" stroke-width="1.8"/>
<circle cx="593.8" cy="158.9" r="6.9" fill="#2e2e2e"/>
<circle cx="589.4" cy="155.4" r="1.2" fill="#e8e8e8"/>
<circle cx="604" cy="148.6" r="1" fill="#444"/>
<text x="622.1" y="169.7" font-size="22.6" fill="#1f1f1f" textLength="99.2" lengthAdjust="spacingAndGlyphs" >Snapshot</text>
<text x="646.0" y="234.7" font-size="21.5" fill="#666" textLength="74.4" lengthAdjust="spacingAndGlyphs" >SIGNAL</text>
<rect x="815.5" y="73.6" width="11" height="10.6" fill="#b3d9ff" stroke="#2b7de0" stroke-width="1.6"/>
<rect x="829.9" y="73.6" width="10.8" height="10.4" fill="#fff" stroke="#7a7a7a" stroke-width="1.6"/>
<rect x="815.5" y="88.6" width="10.2" height="10" fill="#fff" stroke="#7a7a7a" stroke-width="1.6"/>
<rect x="826.2" y="84.3" width="13.6" height="13.6" rx="2.5" fill="#d2d2d2" stroke="#8c8c8c" stroke-width="1.6"/>
<rect x="829.6" y="88.3" width="15" height="14.2" rx="2.8" fill="#fff" stroke="#616161" stroke-width="2"/>
<text x="857.1" y="97.3" font-size="22.6" fill="#1f1f1f" textLength="194.3" lengthAdjust="spacingAndGlyphs" >Copy to Clipboard</text>
<rect x="815.7" y="121.6" width="22.8" height="23" rx="2.5" fill="#fff" stroke="#616161" stroke-width="2"/>
<path d="M816.5 133.4C818 137 820 139.5 823 137.5C827 134 829 126.5 833.5 127.2C836 127.6 837 130 838 132.5" fill="none" stroke="#1a6fd0" stroke-width="1.8"/>
<rect x="825.8" y="132.1" width="18.8" height="18.6" rx="2.5" fill="#fff" stroke="#616161" stroke-width="2"/>
<path d="M828.6 149.2C828.6 142.5 831.5 138.6 836.2 138.6V134.6L843.6 141.3L836.2 147.6V143.8C832.5 143.8 830 145.6 828.6 149.2Z" fill="#c5f0c5" stroke="#0a870a" stroke-width="1.6" stroke-linejoin="round"/>
<text x="857.5" y="145.6" font-size="22.6" fill="#1f1f1f" textLength="151.5" lengthAdjust="spacingAndGlyphs" >Print to Figure</text>
<path d="M819.8 181V171.8Q819.8 169.6 822 169.6H836L840.2 173.8V181Z" fill="#fff" stroke="#616161" stroke-width="2" stroke-linejoin="round"/>
<rect x="815.6" y="181.2" width="29" height="10.8" rx="2.5" fill="#cdcdcd" stroke="#616161" stroke-width="2"/>
<rect x="819.4" y="187.2" width="21.4" height="11.6" rx="1.5" fill="#fff" stroke="#616161" stroke-width="2"/>
<path d="M822.6 190.6H837.4M822.6 194.6H830.4" stroke="#444" stroke-width="1.6"/>
<text x="857.9" y="193.6" font-size="22.6" fill="#1f1f1f" textLength="49.9" lengthAdjust="spacingAndGlyphs" >Print</text>
<text x="900.8" y="234.7" font-size="21.5" fill="#666" textLength="66.8" lengthAdjust="spacingAndGlyphs" >SHARE</text>
<rect x="2243.6" y="214.2" width="20.6" height="3.8" fill="#a9a9a9"/><path d="M2243.6 234L2253.9 221.4L2264.2 234Z" fill="#a9a9a9"/>
</g>
</svg>
</body></html>
